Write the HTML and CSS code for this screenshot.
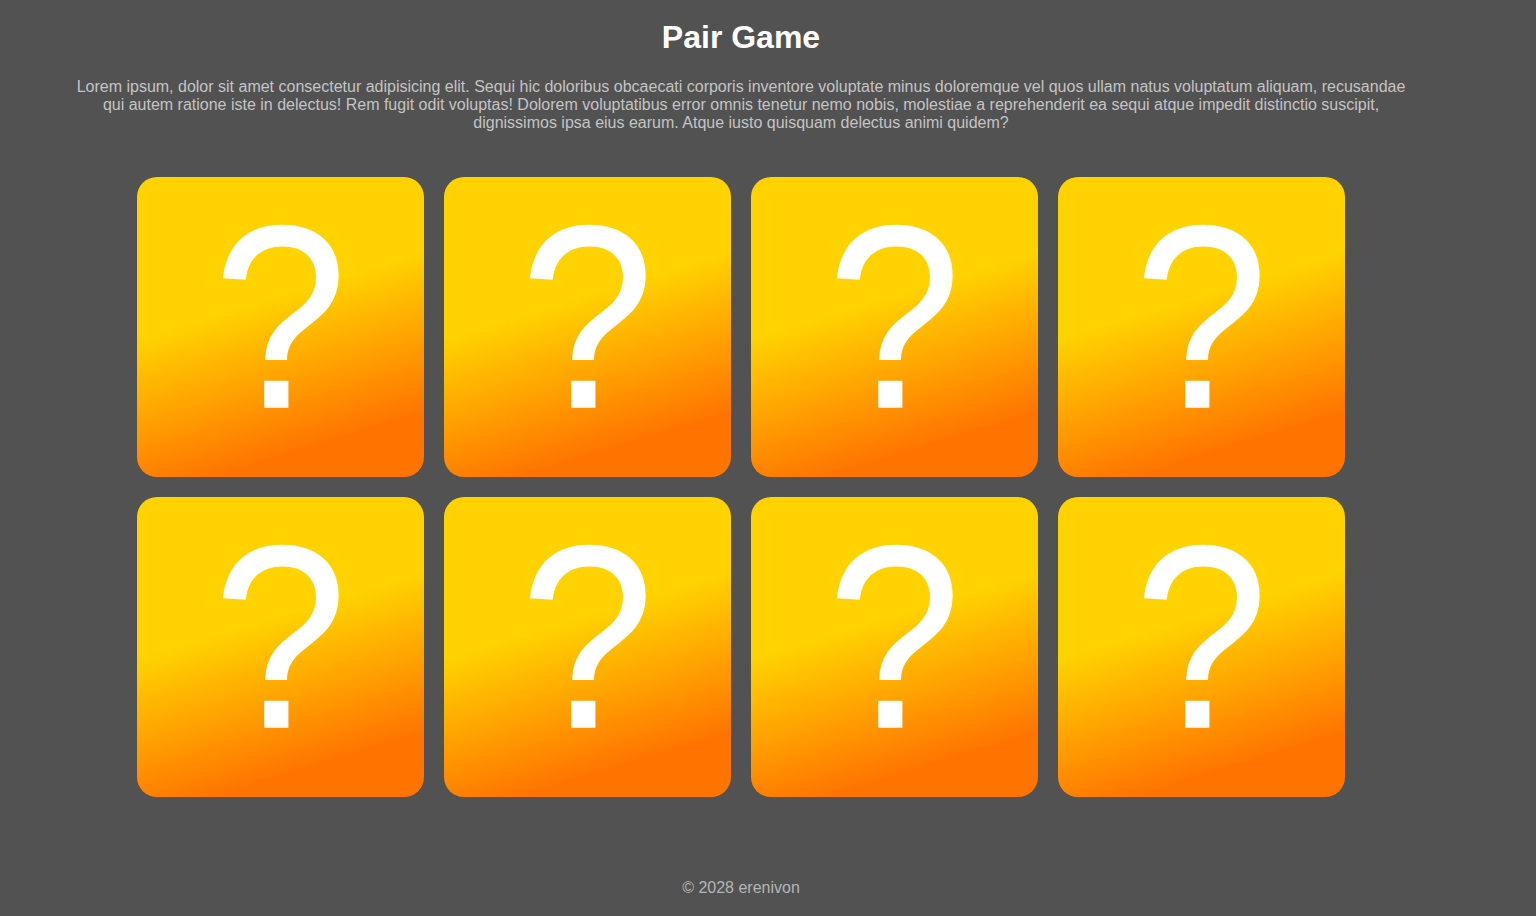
FILE: index.html
```html
<!DOCTYPE html>
<html lang="en">
<head>
<meta charset="utf-8">
<title>Pair Game</title>
<link rel="stylesheet" href="styles.css">
</head>
<body>
<div class="page">
  <header class="header">
    <h1 class="title">Pair Game</h1>
    <p class="intro">Lorem ipsum, dolor sit amet consectetur adipisicing elit. Sequi hic doloribus obcaecati corporis inventore voluptate minus doloremque vel quos ullam natus voluptatum aliquam, recusandae qui autem ratione iste in delectus! Rem fugit odit voluptas! Dolorem voluptatibus error omnis tenetur nemo nobis, molestiae a reprehenderit ea sequi atque impedit distinctio suscipit, dignissimos ipsa eius earum. Atque iusto quisquam delectus animi quidem?</p>
  </header>
  <main class="board">
    <div class="card"><span class="mark">?</span></div>
    <div class="card"><span class="mark">?</span></div>
    <div class="card"><span class="mark">?</span></div>
    <div class="card"><span class="mark">?</span></div>
    <div class="card"><span class="mark">?</span></div>
    <div class="card"><span class="mark">?</span></div>
    <div class="card"><span class="mark">?</span></div>
    <div class="card"><span class="mark">?</span></div>
  </main>
  <footer class="footer">© 2028 erenivon</footer>
</div>
</body>
</html>
```

FILE: styles.css
```css
html, body {
  margin: 0;
  padding: 0;
  background: #525252;
  font-family: "Liberation Sans", Arial, sans-serif;
}
.page {
  width: 1482px;
  height: 916px;
  display: flex;
  flex-direction: column;
  align-items: center;
}
.header {
  display: flex;
  flex-direction: column;
  align-items: center;
}
.title {
  margin: 18px 0 0;
  font-size: 32px;
  line-height: 38px;
  color: #ffffff;
  font-weight: bold;
}
.intro {
  margin: 22px 0 0;
  padding: 0 70px;
  font-size: 16px;
  line-height: 18px;
  color: #c4c4c4;
  text-align: center;
}
.board {
  margin-top: 45px;
  display: grid;
  grid-template-columns: repeat(4, 287px);
  grid-auto-rows: 300px;
  gap: 20px;
}
.card {
  border-radius: 20px;
  background: linear-gradient(163deg, #ffd200 42%, #ff7300 84%);
  display: flex;
  justify-content: center;
  align-items: flex-start;
}
.mark {
  display: block;
  color: #ffffff;
  font-size: 260px;
  line-height: 1.1;
  margin-top: -3px;
  transform: scaleX(0.92);
  -webkit-text-stroke: 1.5px #ffffff;
}
.footer {
  margin-top: 81px;
  font-size: 16px;
  line-height: 20px;
  color: #b5b5b5;
}
```
